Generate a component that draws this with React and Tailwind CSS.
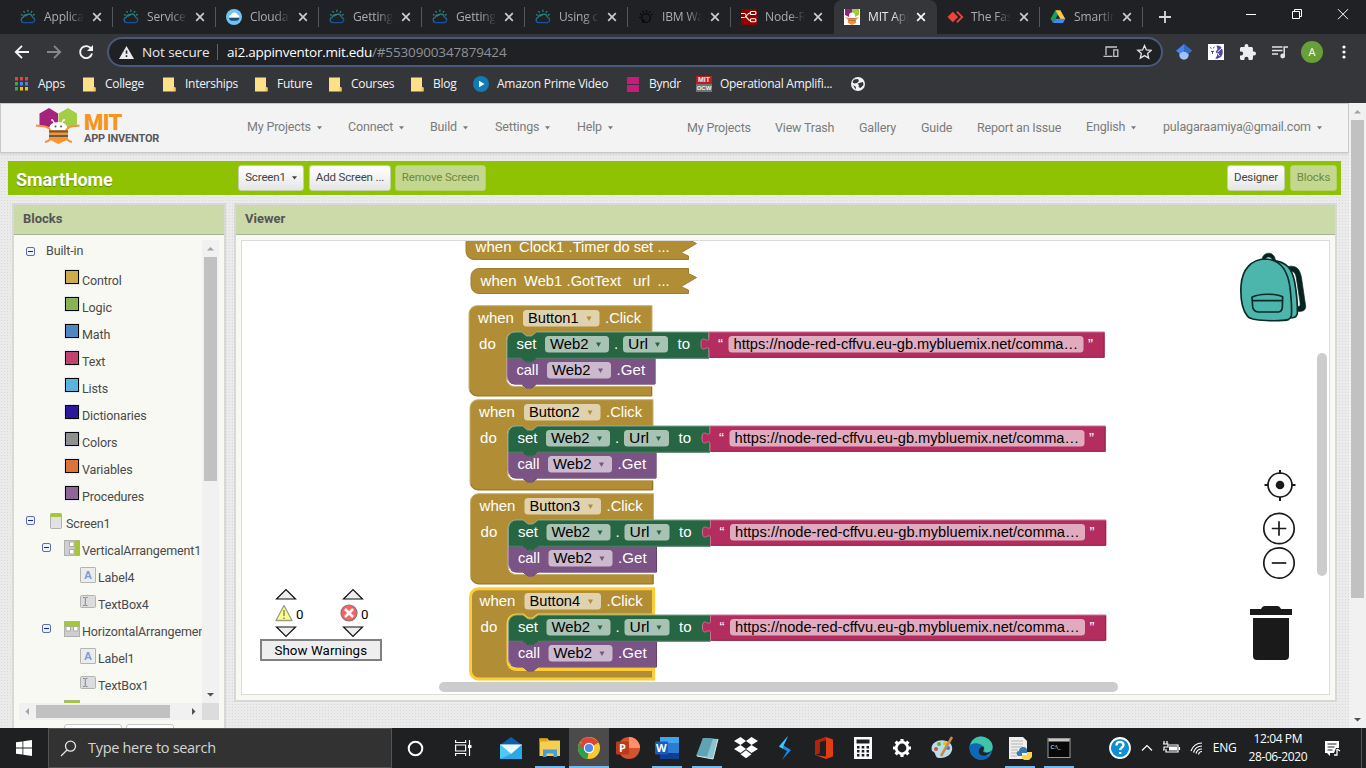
import React from "react";

const chromeFont = "font-['Open_Sans','Noto_Sans',sans-serif]";

function CloudIcon() {
  return (
    <svg width="16" height="16" viewBox="0 0 16 16" fill="none" strokeWidth="1.3">
      <defs>
        <linearGradient id="cloudInk" x1="0" y1="0" x2="0.3" y2="1">
          <stop offset="0" stopColor="#2f8f7c" />
          <stop offset="1" stopColor="#17509b" />
        </linearGradient>
      </defs>
      <path d="M3.6 13.6a2.7 2.7 0 0 1-.4-5.3 3.2 3.2 0 0 1 4.6-2.2M3.6 13.6h8.700a2.700 2.700 0 0 0 .3-5.300M5 7.600a4 4 0 0 1 7.600 .8" stroke="url(#cloudInk)" />
      <path d="M1 5.500l1.600.8M3.500 2.200l1.100 1.500M7.900.8v1.900M12 2.200l-1 1.500M14.700 5.300l-1.600.8" stroke="#2f8a80" />
    </svg>
  );
}

function CloudantIcon() {
  return (
    <svg width="16" height="16" viewBox="0 0 16 16">
      <circle cx="8" cy="8" r="8" fill="#70c5ee" />
      <path d="M3 8.200c0-1.600 1-2.300 2.100-2.400C5.700 4 7 3.400 8.500 3.500c1.800 0 2.700 1 3 2.300 1.200.2 1.900 1.200 1.900 2.400z" fill="#fff" />
      <path d="M3 9h10.400c-.3 2-1.500 2.700-3 2.800H6C4.400 11.800 3.300 10.900 3 9z" fill="#1f4f7c" />
    </svg>
  );
}

function WatsonIcon() {
  return (
    <svg width="16" height="16" viewBox="0 0 16 16" fill="none" stroke="#070808" strokeWidth="1.200">
      <circle cx="8" cy="9" r="4.300" />
      <path d="M3.500 5.500L1.800 4.400M5.700 3.600L4.800 1.800M8.500 3V1M11.300 3.800l1-1.700M13 6l1.700-1M2.800 8.500H.8M4 13.500l2.500-3M5.800 11.500l-.8 2" />
    </svg>
  );
}

function NodeRedIcon() {
  return (
    <svg width="16" height="16" viewBox="0 0 16 16" fill="none" stroke="#fff" strokeWidth="1.100">
      <rect width="16" height="16" rx="1" fill="#8f0000" stroke="none" />
      <path d="M0 8.500h2.500c4 0 3-4.500 7-4.500M4 7.500c3 0 2 4 5.500 4" />
      <rect x="9.300" y="2.500" width="5.600" height="3" rx="1" />
      <rect x="9.300" y="9.800" width="5.600" height="3" rx="1" />
      <path d="M0 4.500h3.500c1.500 0 1 1.500 2 2.500" />
    </svg>
  );
}

function BeeIcon() {
  return (
    <svg width="16" height="16" viewBox="0 0 16 16">
      <rect width="16" height="16" fill="#fff" />
      <path d="M1 0h7v5L5 8 1 6z" fill="#8f217f" />
      <path d="M8 0h7v6l-4 2-3-3z" fill="#9fcb3b" />
      <circle cx="8" cy="6.500" r="3" fill="#fff" />
      <path d="M1 8l4 1h6l4-1-3 3v3l-4 2-4-2v-3z" fill="#f7903a" />
      <path d="M4.500 9.500h7M4.500 11.500h7" stroke="#a26a3a" strokeWidth=".8" />
    </svg>
  );
}

function AnyDeskIcon() {
  return (
    <svg width="17" height="16" viewBox="0 0 17 16">
      <path d="M.5 8l5.300-5.300L11.100 8l-5.300 5.300z" fill="#ef443b" />
      <path d="M9.200 3.200L14 8l-4.800 4.800 1.300 1.300L16.500 8l-6-6z" fill="#ef443b" />
    </svg>
  );
}

function DriveIcon() {
  return (
    <svg width="16" height="16" viewBox="0 0 16 16">
      <path d="M5.300 1.200L.6 9.800l2.400 4.200 5-8.500z" fill="#17a05d" />
      <path d="M5.300 1.200h5L15.300 10h-4.900z" fill="#ffcd40" />
      <path d="M3 14l2.500-4.200h9.900L13 14z" fill="#4587f4" />
    </svg>
  );
}

const tabs = [
  { t: "Applica", I: CloudIcon },
  { t: "Service", I: CloudIcon },
  { t: "Cloudan", I: CloudantIcon },
  { t: "Getting", I: CloudIcon },
  { t: "Getting", I: CloudIcon },
  { t: "Using cl", I: CloudIcon },
  { t: "IBM Wa", I: WatsonIcon },
  { t: "Node-R", I: NodeRedIcon },
  { t: "MIT App", I: BeeIcon, active: true },
  { t: "The Fas", I: AnyDeskIcon },
  { t: "SmartIn", I: DriveIcon },
];

function Tab({ t, I, active, beforeActive }) {
  return (
    <div className={"flex h-[34px] w-[103px] shrink-0 items-center " + (active ? "rounded-t-lg bg-[#35363a]" : "")}>
      <span className="ml-[10px] flex w-[24px] shrink-0"><I /></span>
      <span className={"w-[41px] shrink-0 overflow-hidden whitespace-nowrap text-[12px] tracking-[-0.15px] [mask-image:linear-gradient(to_right,black_60%,transparent_98%)] " + (active ? "text-[#e8eaed]" : "text-[#a9adb2]")}>{t}</span>
      <svg className="ml-[7px] shrink-0" width="10" height="10" viewBox="0 0 10 10" stroke={active ? "#fff" : "#c9cbce"} strokeWidth="1.700"><path d="M1.200 1.200l7.600 7.600M8.800 1.200L1.200 8.800" /></svg>
      {!active && !beforeActive && <span className="ml-auto h-5 w-px bg-[#55575b]" />}
    </div>
  );
}

function TabStrip() {
  return (
    <div className="flex h-[34px] items-center bg-[#202124] pl-[10px]">
      {tabs.map((x, i) => <Tab key={i} {...x} beforeActive={i === 7} />)}
      <svg className="ml-[16px]" width="12" height="12" viewBox="0 0 12 12" stroke="#d6d8db" strokeWidth="1.800"><path d="M6 0v12M0 6h12" /></svg>
      <svg className="mb-[6px] ml-[75px]" width="103" height="12" viewBox="0 0 103 12" fill="none" stroke="#fff" strokeWidth="1">
        <path d="M0 6.500h10" />
        <path d="M46.500 3.500h7v7h-7zM48.500 3.500v-2h7v7h-2" />
        <path d="M92 1.200l10 10M102 1.200l-10 10" />
      </svg>
    </div>
  );
}

function Toolbar() {
  return (
    <div className="flex h-[34px] items-center bg-[#35363a] pt-[2px]">
      <svg className="ml-[14px]" width="82" height="16" viewBox="0 0 82 16" fill="none" strokeWidth="1.900">
        <path d="M15 8H2.500M8 1.800L1.800 8 8 14.200" stroke="#f1f3f4" />
        <path d="M33 8h12.500M40 1.800L46.200 8 40 14.200" stroke="#85878a" />
        <path d="M77.300 5A6 6 0 1 0 78 9.500" stroke="#f1f3f4" />
        <path d="M79 1v6h-6z" fill="#f1f3f4" stroke="none" />
      </svg>
      <div className="ml-[11px] flex h-[30px] w-[1056px] items-center rounded-full border-2 border-[#48597a] bg-[#202124] text-[13.500px]">
        <svg className="ml-[10px]" width="15" height="13" viewBox="0 0 15 13"><path d="M7.500 0L15 13H0z" fill="#e8eaed" /><path d="M7.500 4.500v3.300M7.500 9.300v1.700" stroke="#202124" strokeWidth="1.600" /></svg>
        <span className="ml-[8px] w-[75px] whitespace-nowrap tracking-[-0.1px] text-[#e8eaed]">Not secure</span>
        <span className="h-4 w-px bg-[#5f6368]" />
        <span className="ml-[9px] w-[145px] whitespace-nowrap tracking-[-0.25px] text-white">ai2.appinventor.mit.edu</span>
        <span className="whitespace-nowrap tracking-[-0.150px] text-[#8f9296]">/#5530900347879424</span>
        <svg className="mr-[9px] ml-auto" width="49" height="16" viewBox="0 0 49 16" fill="none" stroke="#c3c5c8" strokeWidth="1.300">
          <path d="M14 3H3v8M.5 12.300h9M10.800 5.800h4v6.500h-4z" />
          <path d="M41.500 1.500l1.900 4.400 4.800.4-3.600 3.100 1.100 4.700-4.200-2.500-4.200 2.500 1.100-4.700-3.600-3.100 4.800-.4z" stroke="#e0e2e4" />
        </svg>
      </div>
      <svg className="ml-[13px]" width="16" height="16" viewBox="0 0 16 16"><circle cx="8" cy="11" r="4.700" fill="#a0c3ff" /><path d="M0 6.700L8 0l8 6.700-4 3.300a4.700 4.700 0 0 0-8 0z" fill="#4285f4" /><path d="M8 0l8 6.700-4 3.300a5 5 0 0 0-4-2.500z" fill="#356ac3" /></svg>
      <svg className="ml-[16px]" width="16" height="16" viewBox="0 0 16 16"><rect width="16" height="16" fill="#fff" /><path d="M8.500 1.500c4-.5 6.500 3 6.300 7-.3 4-3.500 6.500-7.500 6.300 1-2 2-3 2.200-5L7.500 8l2-2.500z" fill="#5247a5" /><path d="M2 3.500l1.500.8M6.500 3L5 4.300M3 7l1.500 1L6 7M4.500 8v2" stroke="#5247a5" /><path d="M9.500 8l4.500-4M9.500 9l2 3" stroke="#fff" /></svg>
      <svg className="ml-[16px]" width="16" height="16" viewBox="2 1 21 21" fill="#eceef0"><path d="M20.500 11H19V7c0-1.100-.9-2-2-2h-4V3.500a2.500 2.500 0 0 0-5 0V5H4c-1.100 0-2 .9-2 2v3.800h1.500a2.700 2.700 0 0 1 0 5.400H2V20c0 1.100.9 2 2 2h3.800v-1.500a2.700 2.700 0 0 1 5.400 0V22H17c1.100 0 2-.9 2-2v-4h1.500a2.500 2.500 0 0 0 0-5z" /></svg>
      <svg className="ml-[16px]" width="16" height="14" viewBox="0 0 16 14" fill="none" stroke="#e1e3e5" strokeWidth="1.500"><path d="M0 2h10.500M0 5.500h10.500M0 9h6M12.200 11V2H16" /><circle cx="10.700" cy="11" r="1.700" fill="#e1e3e5" /></svg>
      <span className="ml-[13px] flex h-[22px] w-[22px] items-center justify-center rounded-full bg-[#689f38] text-[11px] text-white">A</span>
      <svg className="ml-[19px]" width="4" height="14" viewBox="0 0 4 14" fill="#fff"><circle cx="2" cy="2" r="1.600" /><circle cx="2" cy="7" r="1.600" /><circle cx="2" cy="12" r="1.600" /></svg>
    </div>
  );
}

const Folder = () => (
  <svg width="13" height="15" viewBox="0 0 13 15"><path d="M0 .5h11v9.500l1.500.8V14.500H0z" fill="#ffe08a" /><path d="M0 14h12.500v-3.700h-2.300V14" fill="#f3c94f" /></svg>
);

function Bookmarks() {
  const folders = [["College", "w-[80px]"], ["Interships", "w-[92px]"], ["Future", "w-[74px]"], ["Courses", "w-[82px]"], ["Blog", "w-[62px]"]];
  return (
    <div className="flex h-[35px] items-center bg-[#35363a] pb-[3px] text-[12px] tracking-[-0.28px] whitespace-nowrap text-[#f1f3f4]">
      <svg className="ml-[15px]" width="13" height="14" viewBox="0 0 13 14">
        {["#ea4335", "#ea4335", "#ea4335", "#34a853", "#4285f4", "#4285f4", "#34a853", "#fbbc05", "#fbbc05"].map((c, i) => <rect key={i} x={(i % 3) * 5} y={Math.floor(i / 3) * 5} width="3" height="3.500" fill={c} />)}
      </svg>
      <span className="ml-[10px] w-[45px]">Apps</span>
      {folders.map(([n, w]) => <span key={n} className={"flex shrink-0 items-center gap-[9px] " + w}><Folder />{n}</span>)}
      <svg width="16" height="16" viewBox="0 0 16 16"><circle cx="8" cy="8" r="8" fill="#127bb2" /><path d="M6 4.800l5.500 3.200L6 11.200z" fill="#fff" /></svg>
      <span className="ml-[8px] w-[130px]">Amazon Prime Video</span>
      <span className="flex w-[22px] flex-col gap-px"><i className="h-[7px] w-3 bg-[#cc1a7c]" /><i className="h-[7px] w-3 bg-[#cc1a7c]" /></span>
      <span className="w-[47px]">Byndr</span>
      <span className="flex w-4 flex-col font-['Liberation_Sans',sans-serif] text-[7px] leading-[8px] font-bold tracking-normal"><i className="flex h-2 justify-center bg-[#b51f24] not-italic">MIT</i><i className="flex h-2 justify-center bg-[#77736c] text-[6px] not-italic">OCW</i></span>
      <span className="ml-[8px] w-[131px]">Operational Amplifi...</span>
      <svg width="14" height="14" viewBox="0 0 14 14"><circle cx="7" cy="7" r="7" fill="#f1f3f4" /><path d="M3 2.500l4-.5 1 2-2 2-3 .5L1.500 5zM8 6l4-1 .5 3-3 3-2-1 .5-2-1.500-1zM2 8l3 2-.5 2.500z" fill="#35363a" /></svg>
    </div>
  );
}

function Caret() {
  return <svg className="ml-[6px] shrink-0" width="5" height="4" viewBox="0 0 5 4"><path d="M0 .3h5L2.500 3.600z" fill="#7a7a7a" /></svg>;
}

const nav = [
  ["My Projects", "w-[101px]", 1], ["Connect", "w-[82px]", 1], ["Build", "w-[65px]", 1], ["Settings", "w-[82px]", 1], ["Help", "w-[110px]", 1],
  ["My Projects", "w-[88px]", 0], ["View Trash", "w-[84px]", 0], ["Gallery", "w-[62px]", 0], ["Guide", "w-[56px]", 0], ["Report an Issue", "w-[109px]", 0],
  ["English", "w-[77px]", 1], ["pulagaraamiya@gmail.com", "w-[170px]", 1],
];

function AppHeader() {
  return (
    <div className="flex h-[50px] shrink-0 items-center border border-[#c9c9c9] bg-[#f3f3f3] shadow-[0_1px_2px_rgba(0,0,0,0.12)]">
      <svg className="mb-[3px] ml-[35px]" width="44" height="37" viewBox="0 0 44 37">
        <path d="M3.500 5.500L13 0l9 5.500v11l-4 3.500-14.500-2z" fill="#a5227d" />
        <path d="M22.500 5.500L32 0l9 5.500v11L30 20l-7.500-4z" fill="#a3ce46" />
        <path d="M0 17.500c5 1 10-.5 14 3.500M43.500 17.500c-5 1-9-.5-13 3.500M9 33.500c3 1 4-2 6-3M36 33.500c-3 1-4-2-6-3" stroke="#f7903a" strokeWidth="2" fill="none" />
        <path d="M13 19l19 0v12.500L22.500 36 13 31.500z" fill="#f9952b" />
        <path d="M13.500 19.500c0-7 17.500-7 17.500 0l-2 2.500H15.500z" fill="#fff" />
        <path d="M18.500 15.500l-2-3.500h-1.500M25.500 15.500l2-3.500h1.500" fill="none" stroke="#fff" strokeWidth="1.300" />
        <circle cx="19.500" cy="18.500" r="1" fill="#555" /><circle cx="25" cy="18.500" r="1" fill="#555" />
        <path d="M13 23.500h19M13 28h19" stroke="#5b5b5b" strokeWidth="1.800" />
      </svg>
      <div className="ml-[4px] flex w-[163px] flex-col pt-px whitespace-nowrap">
        <span className="font-[Roboto,sans-serif] text-[22px] leading-[20px] font-black tracking-[-0.5px] text-[#f7941e]">MIT</span>
        <span className="text-[11px] leading-[12px] font-bold tracking-[-0.2px] text-[#58595b]">APP INVENTOR</span>
      </div>
      <div className="flex text-[12.500px] tracking-[-0.17px] whitespace-nowrap text-[#7b7b7b]">
        {nav.map(([n, w, c], i) => (
          <span key={i} className={"flex shrink-0 items-center " + w + (c ? " pb-px" : " pt-px")}>{n}{c ? <Caret /> : null}</span>
        ))}
      </div>
    </div>
  );
}

function Btn({ w, off, children }) {
  return <span className={"flex h-[26px] items-center justify-center rounded-[3px] border pb-px text-[11.500px] tracking-[-0.15px] whitespace-nowrap " + w + (off ? " border-[#b4cf6d] bg-[#c3d88e] text-[#748743]" : " border-[#c4cfae] bg-linear-to-b from-white to-[#e6e6e6] text-[#444]")}>{children}</span>;
}

function ProjectBar() {
  return (
    <div className="mx-2 mt-2 flex h-[34px] shrink-0 items-center bg-[#8fc202]">
      <span className="w-[230px] pt-[3px] pl-2 text-[18px] font-bold tracking-[-0.1px] text-white [text-shadow:0_1px_1px_rgba(0,0,0,0.3)]">SmartHome</span>
      <div className="flex">
        <Btn w="w-[66px] mr-[5px]">Screen1<svg className="ml-[6px]" width="5" height="4" viewBox="0 0 5 4"><path d="M0 .3h5L2.500 3.600z" fill="#444" /></svg></Btn>
        <Btn w="w-[82px] mr-[4px]">Add Screen ...</Btn>
        <Btn w="w-[91px]" off>Remove Screen</Btn>
      </div>
      <div className="mr-1 ml-auto flex gap-[5px]">
        <Btn w="w-[58px]">Designer</Btn>
        <Btn w="w-[47px]" off>Blocks</Btn>
      </div>
    </div>
  );
}

function Minus() {
  return <svg width="9" height="9" viewBox="0 0 9 9"><rect x=".5" y=".5" width="8" height="8" rx="1.500" fill="#eef2fb" stroke="#5a6eb0" /><path d="M2 4.500h5" stroke="#1522aa" /></svg>;
}

const treeIcons = {
  screen: <svg width="12" height="16" viewBox="0 0 12 16"><rect x=".5" y=".5" width="11" height="15" rx="1" fill="#e2e2e2" stroke="#b0b0b0" /><path d="M.5.5h11v3.500H.5z" fill="#a5c735" /></svg>,
  va: <svg width="16" height="16" viewBox="0 0 16 16"><rect x=".5" y=".5" width="15" height="15" fill="#cfcfcf" stroke="#b0b0b0" /><path d="M10.500.5H16v15h-5.500z" fill="#a5c735" /><path d="M5.500 2h4.500v4.500H5.500zM5.500 9.500h4.500V14H5.500z" fill="#fff" stroke="#aaa" /></svg>,
  ha: <svg width="16" height="16" viewBox="0 0 16 16"><rect x=".5" y=".5" width="15" height="15" fill="#cfcfcf" stroke="#b0b0b0" /><path d="M.5.5h15v5.500H.5z" fill="#a5c735" /><path d="M2 5.500h4.500V10H2zM9.500 5.500H14V10H9.500z" fill="#fff" stroke="#aaa" /></svg>,
  label: <span className="flex h-4 w-4 items-center justify-center rounded-[1px] border border-[#b4b4b4] bg-[#ececec] font-['Liberation_Sans',sans-serif] text-[11px] font-bold text-[#7b9dd2]">A</span>,
  text: <svg width="16" height="14" viewBox="0 0 16 14"><rect x=".5" y=".5" width="15" height="12" rx="1" fill="#dcdcdc" stroke="#b4b4b4" /><path d="M3 2.500h1.500l.8.500.8-.5h1.500M3 10.500h1.500l.8-.5.8.5h1.500M5.300 3v7" stroke="#7788a0" fill="none" /></svg>,
};

const swatches = [["Control", "#cdab4a"], ["Logic", "#88b453"], ["Math", "#5087c1"], ["Text", "#c1446f"], ["Lists", "#59b3dc"], ["Dictionaries", "#2d1799"], ["Colors", "#8f8f8f"], ["Variables", "#db7438"], ["Procedures", "#8f6695"]];

function Node({ pad, open, icon, label }) {
  return (
    <div className={"flex h-[27px] shrink-0 items-center " + pad}>
      {open && <span className="w-[24px] shrink-0 pb-[6px]"><Minus /></span>}
      <span className="mr-[2px] shrink-0 pb-[5px]">{icon}</span>
      <span className="pt-px">{label}</span>
    </div>
  );
}

function BlocksPanel() {
  return (
    <div className="flex w-[214px] shrink-0 flex-col border-2 border-b-0 border-[#d8d8d6] bg-[#f8f9f3]">
      <div className="h-[30px] shrink-0 border-b border-[#a9b198] bg-[#cbdaa9] pl-[9px] text-[13px] leading-[28px] font-bold text-[#555]">Blocks</div>
      <div className="mt-[5px] ml-[5px] flex w-[200px] shrink-0">
        <div className="flex h-[463px] w-[183px] flex-col overflow-hidden text-[12.500px] tracking-[-0.13px] whitespace-nowrap text-[#4a4a4a]">
          <div className="flex h-[27px] shrink-0 items-center pb-[4px] pl-[7px]"><Minus /><span className="ml-[11px]">Built-in</span></div>
          {swatches.map(([n, c]) => (
            <div key={n} className="flex h-[27px] shrink-0 items-center pl-[46px]">
              <span className="mr-[2px] mb-[7px] h-[14px] w-[14px] border border-black outline outline-[#e5e9f3]" style={{ background: c }} />
              <span className="pt-px pl-px">{n}</span>
            </div>
          ))}
          <div className="flex h-[27px] shrink-0 items-center pl-[7px]"><span className="w-[24px] pb-[6px]"><Minus /></span><span className="mr-[4px] pb-[6px]">{treeIcons.screen}</span><span className="pt-px">Screen1</span></div>
          <Node pad="pl-[23px]" open icon={<span className="-ml-[2px] flex">{treeIcons.va}</span>} label="VerticalArrangement1" />
          <Node pad="pl-[61px]" icon={treeIcons.label} label="Label4" />
          <Node pad="pl-[61px]" icon={treeIcons.text} label="TextBox4" />
          <Node pad="pl-[23px]" open icon={<span className="-ml-[2px] flex">{treeIcons.ha}</span>} label="HorizontalArrangement1" />
          <Node pad="pl-[61px]" icon={treeIcons.label} label="Label1" />
          <Node pad="pl-[61px]" icon={treeIcons.text} label="TextBox1" />
          <div className="flex h-[27px] shrink-0 items-start pl-[45px] pt-px">{treeIcons.ha}</div>
        </div>
        <div className="flex h-[463px] w-[17px] flex-col items-center bg-[#f1f1f1]">
          <svg className="my-[5px] shrink-0" width="7" height="7" viewBox="0 0 7 7"><path d="M0 5.500h7L3.500 2z" fill="#a3a3a3" /></svg>
          <span className="h-[224px] w-[13px] bg-[#c1c1c1]" />
          <svg className="mt-auto mb-[5px] shrink-0" width="7" height="7" viewBox="0 0 7 7"><path d="M0 2h7L3.500 5.500z" fill="#505050" /></svg>
        </div>
      </div>
      <div className="ml-[5px] flex h-[17px] w-[200px] shrink-0">
        <div className="flex w-[183px] items-center bg-[#f1f1f1]">
          <svg className="mx-[5px]" width="7" height="7" viewBox="0 0 7 7"><path d="M5 0v7L1.500 3.500z" fill="#a3a3a3" /></svg>
          <span className="h-[13px] w-[134px] bg-[#c1c1c1]" />
          <svg className="mr-[5px] ml-auto" width="7" height="7" viewBox="0 0 7 7"><path d="M2 0v7l3.500-3.500z" fill="#505050" /></svg>
        </div>
        <span className="w-[17px] bg-[#dcdcdc]" />
      </div>
      <div className="mt-[4px] ml-[50px] flex gap-1">
        <span className="h-[22px] w-[58px] rounded-[3px] border border-[#c8c8c8] bg-white" />
        <span className="h-[22px] w-[48px] rounded-[3px] border border-[#c8c8c8] bg-white" />
      </div>
    </div>
  );
}

function Txt({ x, y, w, c = "#fff", children }) {
  return <text x={Number(x) + 0.6} y={y} fill={c} textLength={w} lengthAdjust="spacingAndGlyphs">{children}</text>;
}

function Field({ x, y, w, c, arrow, children }) {
  return (
    <g>
      <rect x={x} y={y} width={w} height="16.500" rx="3.500" fill={c} />
      {children}
      {arrow && <path d={`M${x + w - 13} ${y + 6.500}h5l-2.500 4.500z`} fill={arrow} />}
    </g>
  );
}

function EventBlock({ dx, dy, name, selected }) {
  const outer = "M652 305.700H477a8 8 0 0 0-8 8V388a8 8 0 0 0 8 8H652V386.500H514.500a8 8 0 0 1-8-8V340a8 8 0 0 1 8-8h7l5 4h5l5-4H652z";
  return (
    <g transform={`translate(${dx} ${dy})`}>
      <path d={outer} fill="#b18e35" stroke={selected ? "#fc3" : "#c8b072"} strokeWidth={selected ? 3 : 1} />
      {!selected && <path d="M470 390c1 4 4 5.800 8 5.800h173.500V387" fill="none" stroke="#8e722a" />}
      <path d="M655 358.300H507V376a8 8 0 0 0 8 8h6.500l5 4h5l5-4H655z" fill="#7c5385" stroke="#a387a9" strokeWidth="1" />
      <path d="M509.500 382a8 8 0 0 0 5.500 2h6.500l5 4h5l5-4H655V359" fill="none" stroke="#634269" />
      <path d="M709 332H536.500l-5 4h-5l-5-4H515a8 8 0 0 0-8 8v18h14.500l5 4h5l5-4H709z" fill="#266643" stroke="#7da38e" strokeWidth="1" />
      <path d="M507.500 358h14l5 4h5l5-4H709" fill="none" stroke="#1e5236" />
      <path d="M1104.500 332H709v5.500c0 8-8-5-8 6.500s8-1.500 8 6.500V357.500h395.500z" fill="#b32d5e" stroke="#c97394" strokeWidth="1" />
      <path d="M709.500 357.300h394.500V333" fill="none" stroke="#8f244b" />
      <Txt x="477.500" y="323" w="35.800">when</Txt>
      <Field x={523} y={310} w={76.500} c="#e0d2ae" arrow="#b18e35"><Txt x="527.500" y="323" w="50.500" c="#000">{name}</Txt></Field>
      <Txt x="604.500" y="323" w="36">.Click</Txt>
      <Txt x="478.500" y="348.500" w="16.700">do</Txt>
      <Txt x="515.800" y="349" w="20">set</Txt>
      <Field x={545} y={336} w={64} c="#a8c2b4" arrow="#266643"><Txt x="549.500" y="349" w="38.500" c="#000">Web2</Txt></Field>
      <Txt x="613.500" y="349">.</Txt>
      <Field x={623} y={336} w={45} c="#a8c2b4" arrow="#266643"><Txt x="627.500" y="349" w="20" c="#000">Url</Txt></Field>
      <Txt x="677" y="349" w="12.500">to</Txt>
      <Txt x="717.500" y="349" w="5">“</Txt>
      <Field x={728.500} y={336} w={355} c="#e1abbf"><Txt x="733" y="349" w="344.500" c="#000">https://node-red-cffvu.eu-gb.mybluemix.net/comma…</Txt></Field>
      <Txt x="1087.500" y="349" w="5">”</Txt>
      <Txt x="515.800" y="375" w="22">call</Txt>
      <Field x={547} y={362} w={64} c="#cbbace" arrow="#7c5385"><Txt x="551.500" y="375" w="38.500" c="#000">Web2</Txt></Field>
      <Txt x="616" y="375" w="28.500">.Get</Txt>
    </g>
  );
}

function Collapsed({ left, dy, children }) {
  return (
    <g>
      <path transform={`translate(0 ${dy})`} d={`M688.500 268.500H${left + 8}a8 8 0 0 0-8 8v9a8 8 0 0 0 8 8H688.500V290L681 286.700l15.500-9.200-8-4z`} fill="#b18e35" stroke="#9d7e30" />
      {children}
    </g>
  );
}

function Workspace() {
  return (
    <svg className="block font-['Liberation_Sans',Arial,sans-serif] text-[15px]" width="1087" height="453" viewBox="242 241 1087 453">
      <Collapsed left={466} dy={-34}>
        <Txt x="475" y="252" w="36">when</Txt><Txt x="518.500" y="252" w="45">Clock1</Txt><Txt x="568" y="252" w="84.500">.Timer do set</Txt><Txt x="657" y="252" w="12">...</Txt>
      </Collapsed>
      <Collapsed left={471} dy={0}>
        <Txt x="480" y="286" w="36">when</Txt><Txt x="523.500" y="286" w="38">Web1</Txt><Txt x="566" y="286" w="54.500">.GotText</Txt><Txt x="632.500" y="286" w="17">url</Txt><Txt x="657" y="286" w="12">...</Txt>
      </Collapsed>
      <EventBlock dx={0} dy={0} name="Button1" />
      <EventBlock dx={1} dy={94} name="Button2" />
      <EventBlock dx={1.500} dy={188} name="Button3" />
      <EventBlock dx={1.500} dy={283} name="Button4" selected />

      <g fill="#eee" stroke="#111" strokeWidth="1.200">
        <path d="M276.500 599l9.500-9.500 9.500 9.500zM343.500 599l9.500-9.500 9.500 9.500zM276.500 627l9.500 9.500 9.500-9.500zM343.500 627l9.500 9.500 9.500-9.500z" />
      </g>
      <path d="M284 605.500l8 15h-16z" fill="#ffff8c" stroke="#9c9c84" strokeLinejoin="round" strokeWidth="1.300" />
      <path d="M284 610v6M284 617.500v1.500" stroke="#8f8f70" strokeWidth="1.600" />
      <circle cx="349" cy="613" r="8" fill="#ff5f5f" stroke="#777" strokeWidth="1.200" />
      <path d="M345 609l8 8M353 609l-8 8" stroke="#fff" strokeWidth="2.500" />
      <g className="font-[Roboto,sans-serif] text-[13.300px]">
        <text x="296" y="619" textLength="7.500">0</text>
        <text x="361" y="619" textLength="7.500">0</text>
        <rect x="261" y="640" width="120" height="20" fill="#eee" stroke="#808080" strokeWidth="2" />
        <text x="274.500" y="655" textLength="92.500">Show Warnings</text>
      </g>

      <g transform="translate(1100 236) scale(.33333)" stroke="#0b2a27" strokeWidth="5" strokeLinejoin="round">
        <path d="M486 70c4-24 36-26 40 2l-9 0c-5-12-18-12-22 0z" fill="#05241f" strokeWidth="2" />
        <path d="M560 92c25-5 38 2 44 30l13 88c1 12-8 18-24 16v-14c8 0 8-4 7-14l-11-72c-3-18-9-22-25-20z" fill="#05241f" strokeWidth="2" />
        <path d="M520 73c40 5 56 25 64 65 6 35 9 70 8 95-4 12-10 12-26 13z" fill="#4db6ac" />
        <path d="M442 240c-16-20-21-50-19-90 3-52 33-80 73-81 45 1 67 35 74 85 4 35 6 65 4 85-3 12-10 13-25 14-30 3-73 0-91-4-8-2-12-3-16-9z" fill="#4db6ac" />
        <path d="M456 184c20-12 70-12 92-2l-1 32c-1 10-6 13-12 14h-60c-10-1-16-6-17-16zM455 194h93" fill="none" />
      </g>
      <g fill="none" stroke="#1a1a1a" strokeWidth="1.700">
        <circle cx="1280" cy="485" r="12" />
        <path d="M1280 470v4M1280 497v4M1264.500 485h4M1291.500 485h4" strokeWidth="2" />
        <circle cx="1280" cy="485" r="4.300" fill="#1a1a1a" stroke="none" />
        <circle cx="1279" cy="528.500" r="15.200" /><path d="M1271.800 528.500h14.500M1279 521.200v14.500" />
        <circle cx="1279" cy="563" r="15.200" /><path d="M1271.800 563h14.500" />
      </g>
      <path d="M1250 609h11c1-2 2-3 4-3h12c2 0 3 1 4 3h11v6h-42zM1253 618h36v38a4 4 0 0 1-4 4h-28a4 4 0 0 1-4-4z" fill="#1a1a1a" />
      <rect x="1317" y="353" width="10" height="223" rx="5" fill="#ccc" />
      <rect x="439" y="682" width="679" height="10" rx="5" fill="#ccc" />
    </svg>
  );
}

function ViewerPanel() {
  return (
    <div className="flex h-[499px] w-[1103px] flex-col border-2 border-[#d8d8d6] bg-[#f8f9f3]">
      <div className="h-[30px] shrink-0 border-b border-[#a9b198] bg-[#cbdaa9] pl-[9px] text-[13px] leading-[28px] font-bold text-[#555]">Viewer</div>
      <div className="mx-[5px] mt-[5px] h-[455px] border border-[#dcdcdc] bg-white"><Workspace /></div>
    </div>
  );
}

const G = ({ children, w = 24 }) => <svg width={w} height="24" viewBox="0 0 24 24">{children}</svg>;
const apps = [
  { g: <G><path d="M1 9L12 1l11 8v2H1z" fill="#0f5fae" /><path d="M1 8.500h22V23H1z" fill="#29a9ea" /><path d="M1 8.500h22L12 18z" fill="#eefaff" /><path d="M1 8.500L12 18 1 23z" fill="#4cc9f6" /></G> },
  { g: <G><path d="M1.500 2.500h8l1.500 2h11V20h-20.500z" fill="#f7ce51" /><path d="M1.500 2.500h8v3h-8z" fill="#e5a50c" /><path d="M5 21v-7.500h14V21h-3.500v-3.500h-7V21z" fill="#469ed7" /></G>, on: 1 },
  { g: <G><circle cx="12" cy="12" r="11" fill="#fbc82f" /><path d="M12 12L2.500 6.500A11 11 0 0 0 10.500 23z" fill="#2e9e4f" /><path d="M12 12H2.500a11 11 0 0 1 19-5.500z" fill="#dc4436" /><path d="M2.500 6.500A11 11 0 0 1 21.500 7H12z" fill="#dc4436" /><circle cx="12" cy="12" r="5.200" fill="#fff" /><circle cx="12" cy="12" r="4.100" fill="#4b8cf0" /></G>, on: 1, focus: 1 },
  { g: <G><circle cx="13" cy="12" r="11" fill="#d35230" /><path d="M13 1a11 11 0 0 1 11 11H13z" fill="#ff8f6b" /><rect x="0" y="5.500" width="13" height="13" rx="1" fill="#b83b1d" /><text x="3" y="16" fontSize="11" fontWeight="bold" fill="#fff">P</text></G> },
  { g: <G><rect x="5" y="1" width="19" height="22" rx="1.500" fill="#2b7cd3" /><path d="M5 1h19v6H5z" fill="#41a5ee" /><path d="M5 17h19v6H5z" fill="#103f91" /><rect x="0" y="5.500" width="13" height="13" rx="1" fill="#185abd" /><text x="1" y="16" fontSize="11" fontWeight="bold" fill="#fff">W</text></G>, on: 1 },
  { g: <G><path d="M8 2l15 1-5 20-16-3z" fill="#8cc5cf" /><path d="M8 2l10 .6-6 18L1 20z" fill="#5fa3b4" /><path d="M2 20l16 3 5-20" stroke="#d9e9ec" strokeWidth="1" fill="none" /></G>, on: 1 },
  { g: <G><path d="M6.500 1L0 5l6.500 4L12 5zM17.500 1L24 5l-6.500 4L12 5zM0 13l6.500-4 5.500 4-5.500 4zM24 13l-6.500-4-5.500 4 5.500 4zM6.500 18.300l5.500-4 5.500 4-5.500 4z" fill="#fff" /></G> },
  { g: <G><path d="M15 0L6 10.500l8 4.500L9 24l9-10-7.500-4.500z" fill="#2089e8" /><path d="M15 0L6 10.500l4 2.200.5-3.200z" fill="#3ecbf3" /></G> },
  { g: <G><path d="M14 1l7 2.500v17L14 23l-11-4 11 1.500V4L7.500 6v11L3 19V5z" fill="#e23c13" /><path d="M14 1l-11 4v14l4.500-2V6L14 4z" fill="#b6210c" /></G> },
  { g: <G><path d="M3 1h18v22H3zM5.500 3.500v4h13v-4zM6 10v2.500h2.500V10zm4.700 0v2.500h2.600V10zm4.800 0v2.500H18V10zM6 14v2.500h2.500V14zm4.700 0v2.500h2.600V14zm4.800 0v2.500H18V14zM6 18v2.500h2.500V18zm4.700 0v2.500h2.600V18zm4.800 0v2.500H18V18z" fill="#fff" fillRule="evenodd" /></G> },
  { g: <G><circle cx="12" cy="12" r="5.800" fill="none" stroke="#fff" strokeWidth="2.800" /><path d="M12 3v3M12 18v3M3 12h3M18 12h3M5.600 5.600l2.200 2.200M16.200 16.200l2.200 2.200M5.600 18.400l2.200-2.200M16.200 7.800l2.200-2.200" stroke="#fff" strokeWidth="3.200" /></G> },
  { g: <G><path d="M2 15C-1 5 13 1 20 7c6 7-1 16-11 15-5-.5-2-5-7-7z" fill="#b9ddec" /><circle cx="6" cy="13" r="2" fill="#d94c3a" /><circle cx="9" cy="8" r="2" fill="#5cb23d" /><circle cx="15" cy="7.500" r="2" fill="#f3b61f" /><circle cx="18" cy="12" r="2" fill="#3e79cf" /><path d="M22 1L11 20" stroke="#c78b45" strokeWidth="2.500" /></G> },
  { g: <G><circle cx="12" cy="12" r="11.500" fill="#1684cf" /><path d="M.7 11C2 3 9-1 15 1c7 2 10 8 8 13-2 3-7 3-8 1 2-5-4-10-14-4z" fill="#40c3a7" /><path d="M1 9c6-4 14-1 13 5-3 5 5 7 8 5-7 8-16 5-20-1C.5 15 .3 12 1 9z" fill="#0f68b7" /><path d="M14.500 10.500c1 2 0 3.500-.5 4.500 0 2 6 3 9-1-3 8-15 7-13 0 .5-2 3-4 4.500-3.500z" fill="#202628" /></G> },
  { g: <G><path d="M1 1h14l4 4v18H1z" fill="#eee" /><path d="M3 5h12M3 8h12M3 11h12M3 14h7M3 17h6M3 20h6" stroke="#b5b5b5" /><path d="M11 15c0-5 8-5 8-1v3h-5v3h-4c-2-2-2-5 1-5z" fill="#3c77ab" /><path d="M24 16v5l-3 3h-5l-2-2v-3h5v-3z" fill="#ffd545" /></G>, on: 1 },
  { g: <G><rect x="1" y="2.500" width="22" height="19" fill="#080808" stroke="#9a9a9a" /><path d="M1.500 3h21v2.500h-21z" fill="#c8c8c8" /><text x="3.500" y="12.500" fontSize="6" fill="#fff">C:\_</text></G>, on: 1 },
];

function Taskbar() {
  return (
    <div className="flex h-10 items-center bg-[#1f2021] text-white">
      <svg className="ml-4 shrink-0" width="16" height="16" viewBox="0 0 16 16" fill="#fff"><path d="M0 2.300l6.500-.9v6.200H0zM7.300 1.300L16 0v7.600H7.300zM0 8.400h6.500v6.200L0 13.700zM7.300 8.400H16V16l-8.700-1.300z" /></svg>
      <div className="ml-4 flex h-10 w-[344px] shrink-0 items-center border border-[#545454] bg-[#323232]">
        <svg className="ml-[11px]" width="17" height="17" viewBox="0 0 17 17" fill="none" stroke="#e6e6e6" strokeWidth="1.300"><circle cx="10.500" cy="6.200" r="5" /><path d="M7 10L1 16" /></svg>
        <span className="ml-[11px] text-[14.500px] tracking-[-0.3px] whitespace-nowrap text-[#d5d5d5]">Type here to search</span>
      </div>
      <svg className="ml-[15px] shrink-0" width="17" height="17" viewBox="0 0 17 17"><circle cx="8.500" cy="8.500" r="6.800" fill="none" stroke="#fff" strokeWidth="2" /></svg>
      <svg className="ml-[31px] shrink-0" width="17" height="16" viewBox="0 0 17 16" fill="none" stroke="#fff" strokeWidth="1.200"><path d="M.6 0v2.500h10V0M.6 5h10v6H.6zM.6 16v-2.500h10V16M14.500 0v16" /><path d="M13 5h3.500v3H13z" fill="#fff" stroke="none" /></svg>
      <div className="ml-[19px] flex shrink-0">
        {apps.map((a, i) => (
          <span key={i} className={"relative flex h-10 w-[39.2px] items-center justify-center " + (a.focus ? "bg-[#4b4b4b]" : "")}>
            {a.g}
            {a.on && <i className={"absolute bottom-0 h-[2px] bg-[#76b9ed] " + (a.focus ? "w-full" : "w-[30px]")} />}
          </span>
        ))}
      </div>
      <svg className="ml-[30px] shrink-0" width="22" height="22" viewBox="0 0 22 22"><circle cx="11" cy="11" r="10" fill="#0e90d2" stroke="#fff" strokeWidth="1.800" /><path d="M7.500 8.500c0-5 7-4.500 7-.5 0 2.500-3.300 2.500-3.300 5M11.200 15v2" stroke="#fff" strokeWidth="2.300" fill="none" /></svg>
      <svg className="ml-[10px] shrink-0" width="62" height="16" viewBox="0 0 62 16" fill="none" stroke="#fff" strokeWidth="1.200">
        <path d="M1 10.500l5-5 5 5" />
        <path d="M28 5h9v7H25V9M38.500 7v3M23 1v3M26 1v3M22 4h5v3h-4v3h-1" /><path d="M28 6.500h8v4h-8z" fill="#fff" stroke="none" />
        <path d="M50 11a12 12 0 0 1 11-8M52.500 12.500a9 9 0 0 1 8.500-6.500M55 13.500a6 6 0 0 1 6-4.500M57.500 14.500a3.500 3.500 0 0 1 3.500-3" />
      </svg>
      <span className="ml-[10px] w-[36px] shrink-0 text-[12px] tracking-[-0.3px]">ENG</span>
      <span className="flex w-[58px] shrink-0 flex-col items-center text-[12px] leading-[18px] tracking-[-0.4px] whitespace-nowrap"><span>12:04 PM</span><span>28-06-2020</span></span>
      <svg className="ml-[18px] shrink-0" width="17" height="17" viewBox="0 0 17 17"><path d="M0 1h14v7h-3l-2 5H5v3l-3-3H0z" fill="#fff" /><path d="M2.500 4h9M2.500 7h7M2.500 10h5" stroke="#1f2021" /><path d="M12 9v6h-3M12 9l3 2" stroke="#fff" fill="none" strokeWidth="1.300" /></svg>
      <span className="ml-[19px] h-10 w-px shrink-0 bg-[#555]" />
    </div>
  );
}

export default function App() {
  return (
    <div className={"flex h-[768px] w-[1366px] flex-col overflow-hidden " + chromeFont}>
      <TabStrip />
      <Toolbar />
      <Bookmarks />
      <div className="flex h-[625px] font-[Roboto,sans-serif]">
        <main className="flex w-[1349px] flex-col overflow-hidden bg-[#ebebeb] bg-[radial-gradient(#d8d8d8_0.8px,transparent_0.9px)] bg-size-[3px_3px]">
          <AppHeader />
          <ProjectBar />
          <div className="mt-2 ml-3 flex min-h-0 flex-1 gap-2">
            <BlocksPanel />
            <ViewerPanel />
          </div>
        </main>
        <aside className="flex w-[17px] flex-col items-center bg-[#f1f1f1]">
          <svg className="my-[5px] shrink-0" width="7" height="7" viewBox="0 0 7 7"><path d="M0 5.500h7L3.500 2z" fill="#a3a3a3" /></svg>
          <span className="h-[478px] w-[13px] bg-[#c1c1c1]" />
          <svg className="mt-auto mb-[5px] shrink-0" width="7" height="7" viewBox="0 0 7 7"><path d="M0 2h7L3.500 5.500z" fill="#505050" /></svg>
        </aside>
      </div>
      <Taskbar />
    </div>
  );
}
